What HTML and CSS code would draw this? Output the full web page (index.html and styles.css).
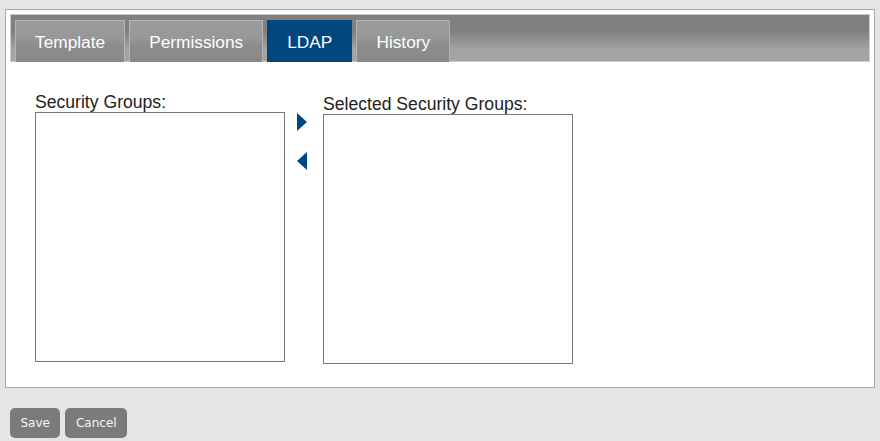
FILE: index.html
```html
<!DOCTYPE html>
<html>
<head>
<meta charset="utf-8">
<link rel="stylesheet" href="styles.css">
</head>
<body>
<div class="panel">
  <div class="tabbar">
    <div class="tab">Template</div>
    <div class="tab">Permissions</div>
    <div class="tab active">LDAP</div>
    <div class="tab">History</div>
  </div>
  <div class="content">
    <div class="col">
      <div class="label">Security Groups:</div>
      <div class="listbox"></div>
    </div>
    <div class="arrows">
      <svg class="arrow" width="10" height="18" viewBox="0 0 10 18"><polygon points="0,0 10,9 0,18" fill="#00467f"/></svg>
      <svg class="arrow" width="10" height="18" viewBox="0 0 10 18"><polygon points="10,0 0,9 10,18" fill="#00467f"/></svg>
    </div>
    <div class="col col-right">
      <div class="label">Selected Security Groups:</div>
      <div class="listbox"></div>
    </div>
  </div>
</div>
<div class="buttons">
  <button class="btn">Save</button>
  <button class="btn">Cancel</button>
</div>
</body>
</html>
```
FILE: styles.css
```css
html, body {
  margin: 0;
  padding: 0;
}
body {
  background: #e5e5e5;
  font-family: "Liberation Sans", Arial, sans-serif;
  padding: 9px 5px 0 5px;
  height: 441px;
  box-sizing: border-box;
}
.panel {
  background: #fff;
  border: 1px solid #aaaaaa;
  padding: 4px 4px 4px 4px;
  height: 379px;
  box-sizing: border-box;
}
.tabbar {
  display: flex;
  gap: 4px;
  height: 48px;
  box-sizing: border-box;
  border: 1px solid #cccccc;
  padding: 5px 4px 0 4px;
  background: linear-gradient(to bottom, #808080 0%, #808080 35%, #a3a3a3 75%, #a5a5a5 100%);
}
.tab {
  box-sizing: border-box;
  height: 42px;
  padding: 0 19px 0 19px;
  border: 1px solid #b4b4b4;
  border-bottom: none;
  background: linear-gradient(to bottom, #9b9b9b 0%, #989898 40%, #8c8c8c 60%, #898989 100%);
  color: #fff;
  font-size: 17.3px;
  line-height: 42px;
}
.tab.active {
  background: #00467f;
  border-color: #00467f;
}
.content {
  display: flex;
  padding: 30px 0 0 25px;
}
.col {
  display: flex;
  flex-direction: column;
}
.label {
  font-size: 17.6px;
  color: #222;
  line-height: 20px;
}
.listbox {
  width: 250px;
  height: 250px;
  box-sizing: border-box;
  border: 1px solid #777;
  background: #fff;
}
.col-right {
  padding-top: 2px;
}
.arrows {
  display: flex;
  flex-direction: column;
  gap: 21px;
  padding: 21px 16px 0 12px;
}
.arrow {
  display: block;
}
.buttons {
  display: flex;
  gap: 5px;
  padding: 20px 0 0 5px;
}
.btn {
  background: #7b7b7b;
  color: #f4f4f4;
  border: none;
  border-radius: 5px;
  height: 30px;
  padding: 0 10.5px;
  font-family: "DejaVu Sans", Verdana, sans-serif;
  font-size: 12px;
  margin: 0;
}
```
